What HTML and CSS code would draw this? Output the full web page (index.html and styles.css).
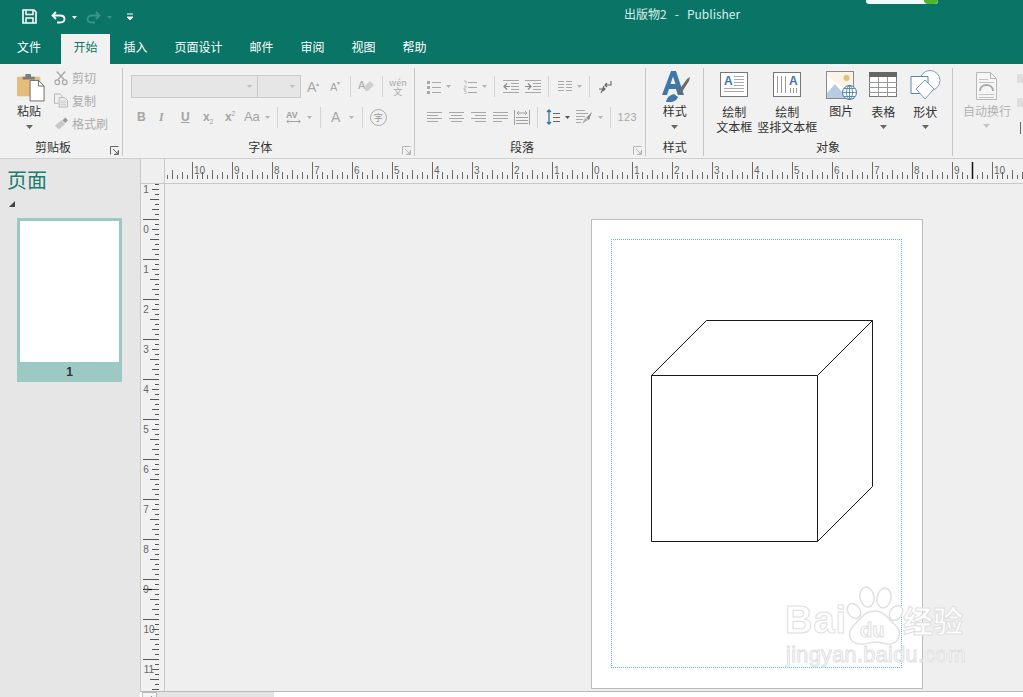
FILE: index.html
```html
<!DOCTYPE html>
<html lang="zh">
<head>
<meta charset="utf-8">
<title>出版物2 - Publisher</title>
<link rel="stylesheet" href="styles.css">
</head>
<body>
<svg class="defs" width="0" height="0" aria-hidden="true">
  <defs>
    <symbol id="arrow" viewBox="0 0 7 4"><path d="M0 0h7L3.5 4z" fill="currentColor"/></symbol>
    <symbol id="launcher" viewBox="0 0 9 9"><path d="M.5 8.5v-8h8M8.5 4v4.5H4M3 3l5 5M5 8h3V5" fill="none" stroke="currentColor"/></symbol>
    <symbol id="al" viewBox="0 0 15 12"><path d="M0 1.5h15M0 4.5h11M0 7.5h15M0 10.500h11" stroke="#a8a8a8"/></symbol>
    <symbol id="ac" viewBox="0 0 15 12"><path d="M0 1.500h15M2 4.500h11M0 7.500h15M2 10.500h11" stroke="#a8a8a8"/></symbol>
    <symbol id="ar" viewBox="0 0 15 12"><path d="M0 1.500h15M4 4.500h11M0 7.500h15M4 10.500h11" stroke="#a8a8a8"/></symbol>
    <symbol id="aj" viewBox="0 0 15 12"><path d="M0 1.500h15M0 4.500h15M0 7.500h15M0 10.500h9" stroke="#a8a8a8"/></symbol>
    <pattern id="hticks" width="40" height="25" patternUnits="userSpaceOnUse" patternTransform="translate(27 0)">
      <path d="M.5 3v17M5.500 16v4M10.500 13v7M15.500 16v4M20.500 11v9M25.500 16v4M30.500 13v7M35.500 16v4" stroke="#6a6a6a"/>
    </pattern>
    <pattern id="vticks" width="25" height="40" patternUnits="userSpaceOnUse" patternTransform="translate(0 35)">
      <path d="M3 .5h16M15 5.500h4M12 10.500h7M15 15.500h4M10 20.500h9M15 25.500h4M12 30.500h7M15 35.500h4" stroke="#555"/>
    </pattern>
  </defs>
</svg>

<header class="topbar">
  <div class="titlerow">
    <div class="qat">
      <svg class="qat-save" width="15" height="15" viewBox="0 0 15 15"><path d="M1 1h11l2 2v11H1z" fill="none" stroke="#fff" stroke-width="1.600"/><path d="M4 1.500v4h7v-4M4 14V9h7v5" fill="none" stroke="#fff" stroke-width="1.500"/></svg>
      <svg class="qat-undo" width="15" height="13" viewBox="0 0 15 13"><path d="M5 1 1.500 4.500 5 8M2 4.500h7c6 0 6 7 0 7H6" fill="none" stroke="#fff" stroke-width="1.800"/></svg>
      <svg class="qat-arr" width="5" height="3"><use href="#arrow"/></svg>
      <svg class="qat-redo" width="15" height="13" viewBox="0 0 15 13"><path d="M10 1l3.500 3.500L10 8M13 4.500H6c-6 0-6 7 0 7h3" fill="none" stroke="#3b9488" stroke-width="1.800"/></svg>
      <svg class="qat-arr dim" width="5" height="3"><use href="#arrow"/></svg>
      <svg class="qat-more" width="6" height="8" viewBox="0 0 6 8"><path d="M0 1h6M0 4h6L3 7z" stroke="#fff" fill="#fff"/></svg>
    </div>
    <div class="doctitle">出版物2 &nbsp;&nbsp;-&nbsp;&nbsp; Publisher</div>
    <div class="notch"><span class="notch-green"></span></div>
  </div>
  <nav class="tabs">
    <span class="tab first">文件</span>
    <span class="tab active">开始</span>
    <span class="tab">插入</span>
    <span class="tab">页面设计</span>
    <span class="tab">邮件</span>
    <span class="tab">审阅</span>
    <span class="tab">视图</span>
    <span class="tab">帮助</span>
  </nav>
</header>

<section class="ribbon">
  <div class="group g-clip">
    <div class="gbody clip-body">
      <div class="big paste">
        <svg width="28" height="31" viewBox="0 0 30 31"><rect x="0" y="5" width="25" height="21" rx="1" fill="#e3bd79"/><path d="M6 5h3V2h6v3h4v3H6z" fill="#7d7d7d"/><path d="M14 9h9l6 6v16H14z" fill="#fff" stroke="#666"/><path d="M23 9v6h6" fill="none" stroke="#666"/></svg>
        <span class="lbl dark">粘贴</span>
        <svg class="drop" width="7" height="4"><use href="#arrow"/></svg>
      </div>
      <div class="smalls">
        <div class="small"><svg width="15" height="16" viewBox="0 0 15 16"><path d="M3 1l8 9M12 1 4 10" stroke="#a8a8a8" stroke-width="1.500"/><circle cx="3.500" cy="12.500" r="2.500" fill="none" stroke="#a8a8a8" stroke-width="1.300"/><circle cx="11.500" cy="12.500" r="2.500" fill="none" stroke="#a8a8a8" stroke-width="1.300"/></svg><span>剪切</span></div>
        <div class="small"><svg width="15" height="15" viewBox="0 0 15 15"><path d="M.5.500h6l2 2v2M.5.500v10h4M5.500 4.500h6l3 3v7h-9z" fill="none" stroke="#b0b0b0"/><path d="M7 8h6M7 10h6M7 12h6" stroke="#c4c4c4"/></svg><span>复制</span></div>
        <div class="small"><svg width="15" height="13" viewBox="0 0 15 13"><path d="M1 9l7-6 4 4-7 6z" fill="#c8c8c8"/><path d="M9 3l3-3 3 3-3 3z" fill="#9a9a9a"/></svg><span>格式刷</span></div>
      </div>
    </div>
    <div class="glabel shifted">剪贴板<svg class="launch" width="9" height="9"><use href="#launcher"/></svg></div>
  </div>

  <div class="group g-font">
    <div class="gbody rows">
      <div class="row r1-font">
        <div class="combo c-name"><svg width="5" height="3"><use href="#arrow"/></svg></div>
        <div class="combo c-size"><svg width="5" height="3"><use href="#arrow"/></svg></div>
        <span class="gly w-a1">A<sup>▴</sup></span>
        <span class="gly w-a2">A<sup>▾</sup></span>
        <i class="sep"></i>
        <svg class="erase" width="16" height="15" viewBox="0 0 16 15"><path d="M7 7l5-5 4 4-6 6H7z" fill="#cfcfcf"/><text x="0" y="10" class="erase-a">A</text></svg>
        <i class="sep"></i>
        <span class="wen"><span>wén</span><span>文</span></span>
      </div>
      <div class="row r2-font">
        <span class="fmt b">B</span>
        <span class="fmt it">I</span>
        <span class="fmt u">U</span>
        <span class="fmt b">x<sub>2</sub></span>
        <span class="fmt b sq">x<sup>2</sup></span>
        <span class="fmt aa">Aa</span>
        <svg class="mini" width="5" height="3"><use href="#arrow"/></svg>
        <i class="sep s1"></i>
        <span class="fmt av"><svg width="16" height="17" viewBox="0 0 18 17"><text x="0" y="9" class="av-t">AV</text><path d="M1 13h15M3 11l-2 2 2 2M14 11l2 2-2 2" fill="none" stroke="#999"/></svg></span>
        <svg class="mini" width="5" height="3"><use href="#arrow"/></svg>
        <i class="sep s2"></i>
        <span class="fmt col-a">A</span>
        <svg class="mini" width="5" height="3"><use href="#arrow"/></svg>
        <i class="sep s3"></i>
        <span class="zi">字</span>
      </div>
    </div>
    <div class="glabel shifted">字体<svg class="launch light" width="9" height="9"><use href="#launcher"/></svg></div>
  </div>

  <div class="group g-para">
    <div class="gbody rows">
      <div class="row r1-para">
        <svg width="14" height="14" viewBox="0 0 14 14"><path d="M5 2.500h9M5 7.500h9M5 12.500h9" stroke="#a8a8a8"/><path d="M0 1h3v3H0zM0 6h3v3H0zM0 11h3v3H0z" fill="#a8a8a8"/></svg>
        <svg class="mini" width="5" height="3"><use href="#arrow"/></svg>
        <svg class="ml12" width="14" height="14" viewBox="0 0 14 14"><path d="M5 2.500h9M5 7.500h9M5 12.500h9" stroke="#a8a8a8"/><path d="M1 1h2v3M1 6h2v2H1v2h2M1 11h2v3H1" fill="none" stroke="#b4b4b4" stroke-width=".8"/></svg>
        <svg class="mini" width="5" height="3"><use href="#arrow"/></svg>
        <i class="sep p1"></i>
        <svg class="ml8" width="16" height="13" viewBox="0 0 16 13"><path d="M0 .500h16M8 3.500h8M8 6.500h8M8 9.500h8M0 12.500h16" stroke="#a8a8a8"/><path d="M7 6.500H1M4 3.500l-3 3 3 3" fill="none" stroke="#8a8a8a" stroke-width="1.200"/></svg>
        <svg class="ml6" width="16" height="13" viewBox="0 0 16 13"><path d="M0 .500h16M8 3.500h8M8 6.500h8M8 9.500h8M0 12.500h16" stroke="#a8a8a8"/><path d="M0 6.500h6M3 3.500l3 3-3 3" fill="none" stroke="#8a8a8a" stroke-width="1.200"/></svg>
        <i class="sep p2"></i>
        <svg class="ml9" width="14" height="11" viewBox="0 0 14 11"><path d="M0 .500h6M8 .500h6M0 3.500h6M8 3.500h6M0 6.500h6M8 6.500h6M0 9.500h6M8 9.500h6" stroke="#a8a8a8"/></svg>
        <svg class="mini" width="5" height="3"><use href="#arrow"/></svg>
        <i class="sep p3"></i>
        <svg class="ml9" width="13" height="14" viewBox="0 0 13 14"><path d="M12 1v4H6M8 3 6 5l2 2" fill="none" stroke="#666" stroke-width="1.100"/><path d="M0 9h6M4 7l2 2-2 2M5 6 2 13" fill="none" stroke="#666" stroke-width="1.100"/></svg>
      </div>
      <div class="row r2-para">
        <svg width="15" height="12"><use href="#al"/></svg>
        <svg class="ml7" width="15" height="12"><use href="#ac"/></svg>
        <svg class="ml7" width="15" height="12"><use href="#ar"/></svg>
        <svg class="ml7" width="15" height="12"><use href="#aj"/></svg>
        <svg class="ml6" width="16" height="15" viewBox="0 0 16 15"><path d="M.5 0v15M15.500 0v15M2 7.500h12M2 10.500h12M2 13.500h12" stroke="#a0a0a0"/><path d="M3 3h10M5 1 3 3l2 2M11 1l2 2-2 2" fill="none" stroke="#a0a0a0"/></svg>
        <i class="sep p4"></i>
        <svg class="ml8" width="14" height="16" viewBox="0 0 14 16"><path d="M3 1v14M1 3l2-2 2 2M1 13l2 2 2-2" fill="none" stroke="#2f73a8" stroke-width="1.300"/><path d="M7 4.500h7M7 8.500h7M7 12.500h7" stroke="#666"/></svg>
        <svg class="mini dk" width="5" height="3"><use href="#arrow"/></svg>
        <svg class="ml6" width="17" height="15" viewBox="0 0 17 15"><path d="M0 .500h9M0 3.500h12M0 6.500h9M0 9.500h7M0 12.500h5" stroke="#a8a8a8"/><path d="M6 14l3-6 3 2z" fill="#b0b0b0"/><path d="M10 8l6-6-3 8z" fill="#8c8c8c"/></svg>
        <svg class="mini" width="5" height="3"><use href="#arrow"/></svg>
        <i class="sep p5"></i>
        <span class="n123">123</span>
      </div>
    </div>
    <div class="glabel shifted">段落<svg class="launch light" width="9" height="9"><use href="#launcher"/></svg></div>
  </div>

  <div class="group g-style">
    <div class="gbody">
      <div class="big stylebtn">
        <svg width="30" height="31" viewBox="0 0 30 31"><path fill-rule="evenodd" d="M2 24 11 0h5l8 24h-6l-2-6H9l-2 6zM10.500 13h5L13 5.500z" fill="#3f77a8"/><path d="M6 31c1-5 4-7 8-8l4 3c-1 4-6 6-12 5z" fill="#3f77a8"/><path d="M17 22 27 8l3-2-1 4-9 14z" fill="#6a6a6a"/></svg>
        <span class="lbl dark">样式</span>
        <svg class="drop" width="7" height="4"><use href="#arrow"/></svg>
      </div>
    </div>
    <div class="glabel">样式</div>
  </div>

  <div class="group g-obj">
    <div class="gbody objs">
      <div class="big o-text">
        <svg width="28" height="26" viewBox="0 0 28 26"><rect x=".5" y=".5" width="27" height="24" fill="#fff" stroke="#777"/><text x="4" y="13" class="ic-a">A</text><path d="M14 4.500h10M14 7.500h10M14 10.500h10M14 13.500h10M4 16.500h20M4 19.500h20" stroke="#aaa"/></svg>
        <span class="lbl dark">绘制<br>文本框</span>
      </div>
      <div class="big o-vert">
        <svg width="28" height="26" viewBox="0 0 28 26"><rect x=".5" y=".5" width="27" height="24" fill="#fff" stroke="#777"/><text x="16" y="13" class="ic-a">A</text><path d="M4.500 4v17M8.500 4v17M12.500 4v17M17.500 16v5M20.500 16v5M23.500 16v5" stroke="#999"/></svg>
        <span class="lbl dark">绘制<br>竖排文本框</span>
      </div>
      <div class="big o-pic">
        <svg width="31" height="29" viewBox="0 0 31 29"><rect x=".5" y=".5" width="27" height="27" fill="#fff" stroke="#8a8a8a"/><path d="M1 5V1h26v22" fill="#fbf3e3"/><circle cx="20.500" cy="7" r="3" fill="#e3bd79"/><path d="M1 27v-5l8-9 7 8 3 6z" fill="#b8cbe0"/><circle cx="23.500" cy="21.500" r="7" fill="#fff" stroke="#3f77a8"/><path d="M16.500 21.500h14M23.500 14.500v14M18 17.500h11M18 25.500h11" stroke="#3f77a8" stroke-width=".8" fill="none"/><ellipse cx="23.500" cy="21.500" rx="3" ry="7" fill="none" stroke="#3f77a8" stroke-width=".8"/></svg>
        <span class="lbl dark">图片</span>
      </div>
      <div class="big o-table">
        <svg width="28" height="26" viewBox="0 0 28 26"><rect x=".5" y=".5" width="27" height="24" fill="#fff" stroke="#777"/><rect width="28" height="5" fill="#666"/><path d="M0 10.500h28M0 15.500h28M0 20.500h28M9.500 5v20M18.500 5v20" stroke="#999"/></svg>
        <span class="lbl dark">表格</span>
        <svg class="drop" width="7" height="4"><use href="#arrow"/></svg>
      </div>
      <div class="big o-shape">
        <svg width="31" height="30" viewBox="0 0 31 30"><circle cx="20" cy="10.500" r="10" fill="#fff" stroke="#7f9fba"/><path d="M1 6.500h17v17H1z" fill="#fff" stroke="#5a86ad"/><path d="M15 10l9 9-9 10-9-10z" fill="#fff" stroke="#7a9ab5"/></svg>
        <span class="lbl dark">形状</span>
        <svg class="drop" width="7" height="4"><use href="#arrow"/></svg>
      </div>
    </div>
    <div class="glabel">对象</div>
  </div>

  <div class="group g-wrap">
    <div class="gbody">
      <div class="big o-wrap">
        <svg width="21" height="28" viewBox="0 0 21 28"><path d="M.5.500h14l6 6v21H.5z" fill="#f6f6f6" stroke="#b8b8b8"/><path d="M14.500.500v6h6" fill="none" stroke="#b8b8b8"/><path d="M3 7.500h9M3 10.500h15M3 22.500h15M3 25.500h15" stroke="#c2c2c2"/><path d="M4 19c0-8 13-8 13 0" fill="none" stroke="#a8a8a8" stroke-width="2"/></svg>
        <span class="lbl grey">自动换行</span>
        <svg class="drop pale" width="7" height="4"><use href="#arrow"/></svg>
      </div>
      <div class="edge"><i></i><i></i><b></b></div>
    </div>
  </div>
</section>

<main class="workspace">
  <aside class="pages">
    <h2 class="pages-title">页面</h2>
    <div class="tri"></div>
    <div class="thumb">
      <div class="thumb-page"></div>
      <div class="thumb-num">1</div>
    </div>
  </aside>
  <div class="editor">
    <div class="corner"></div>
    <svg class="hruler" width="858" height="25" viewBox="0 0 858 25">
      <rect width="858" height="24" fill="url(#hticks)"/>
      <path d="M807.500 3v17" stroke="#111" stroke-width="1.500"/>
      <g class="rtext">
        <text x="29" y="15">10</text><text x="69" y="15">9</text><text x="109" y="15">8</text><text x="149" y="15">7</text><text x="189" y="15">6</text><text x="229" y="15">5</text><text x="269" y="15">4</text><text x="309" y="15">3</text><text x="349" y="15">2</text><text x="389" y="15">1</text><text x="429" y="15">0</text><text x="469" y="15">1</text><text x="509" y="15">2</text><text x="549" y="15">3</text><text x="589" y="15">4</text><text x="629" y="15">5</text><text x="669" y="15">6</text><text x="709" y="15">7</text><text x="749" y="15">8</text><text x="789" y="15">9</text><text x="829" y="15">10</text>
      </g>
    </svg>
    <svg class="vruler" width="25" height="507" viewBox="0 0 25 507">
      <rect width="25" height="507" fill="url(#vticks)"/>
      <path d="M3 405.500h9" stroke="#111" stroke-width="1.200"/>
      <g class="rtext mid">
        <text x="6" y="9">1</text><text x="6" y="49">0</text><text x="6" y="89">1</text><text x="6" y="129">2</text><text x="6" y="169">3</text><text x="6" y="209">4</text><text x="6" y="249">5</text><text x="6" y="289">6</text><text x="6" y="329">7</text><text x="6" y="369">8</text><text x="6" y="409">9</text><text x="9" y="449">10</text><text x="9" y="489">11</text>
      </g>
    </svg>
    <div class="canvas">
      <div class="page">
        <div class="guide"></div>
        <svg class="cube" width="223" height="223" viewBox="0 0 223 223"><path d="M.5 55.500h166v166H.5zM.5 55.500l55-55h166l-55 55M221.500.500v166l-55 55" fill="none" stroke="#1a1a1a"/></svg>
      </div>
    </div>
    <div class="scrollbar">
      <span class="sb-btn"><svg width="5" height="7" viewBox="0 0 5 7"><path d="M5 0v7L0 3.500z" fill="#666"/></svg></span>
      <span class="sb-thumb"></span>
      <span class="sb-rest"></span>
    </div>
  </div>
</main>

<div class="watermark" aria-label="Baidu经验 jingyan.baidu.com">
  <svg width="190" height="90" viewBox="0 0 190 90">
    <g fill="#fff" stroke="#e0e0e0" stroke-width="1.500">
      <ellipse cx="69" cy="25" rx="6" ry="8" transform="rotate(-35 69 25)"/>
      <ellipse cx="82" cy="11" rx="7" ry="10" transform="rotate(-10 82 11)"/>
      <ellipse cx="99" cy="12" rx="7" ry="10" transform="rotate(10 99 12)"/>
      <ellipse cx="111" cy="27" rx="6" ry="8" transform="rotate(35 111 27)"/>
      <path d="M90 25c10 0 13 8 20 14 9 8 3 19-6 19-5 0-9-2-14-2s-10 3-15 2c-11-1-14-11-6-19 7-6 10-14 21-14z"/>
    </g>
    <g class="wm-text">
      <text x="0" y="47" class="wm-bai">Bai</text>
      <text x="75" y="51" class="wm-du">du</text>
      <text x="118" y="46" class="wm-jy">经验</text>
      <text x="1" y="76" class="wm-url">jingyan.baidu.com</text>
    </g>
  </svg>
</div>
</body>
</html>
```
FILE: styles.css
```css
* { box-sizing: border-box; }
html, body { margin: 0; padding: 0; height: 697px; overflow: hidden; }
body {
  position: relative;
  display: flex;
  flex-direction: column;
  font-family: "Noto Sans CJK SC", "Liberation Sans", sans-serif;
  font-size: 12px;
  color: #333;
  background: #efefef;
}
svg { display: block; flex: none; }
.defs { position: absolute; }

/* top bar */
.topbar { height: 64px; background: #0a7566; color: #fff; flex: none; }
.titlerow { height: 34px; display: flex; align-items: center; position: relative; }
.qat { display: flex; align-items: center; padding-left: 22px; width: 500px; color: #fff; }
.qat-save { margin-top: -1px; }
.qat-undo { margin-left: 14px; }
.qat-arr { margin-left: 6px; }
.qat-arr.dim { color: #3b9488; }
.qat-redo { margin-left: 9px; }
.qat-more { margin-left: 15px; }
.doctitle { position: absolute; left: 624px; top: 5px; font-size: 12px; line-height: 17px; color: #d9efe9; white-space: nowrap; }
.notch { position: absolute; left: 866px; top: 0; width: 72px; height: 4px; background: #f2fbfb; border-radius: 0 0 3px 3px; }
.notch-green { position: absolute; right: 0; top: 0; width: 14px; height: 4px; background: #4fb52d; border-radius: 0 0 5px 5px; }

.tabs { height: 30px; display: flex; line-height: 26px; }
.tab { padding: 0 13.500px; color: #fff; }
.tab.first { margin-left: 3.500px; margin-right: 6.500px; }
.tab.active { width: 49px; padding: 0; text-align: center; background: #f1f1f1; color: #0a7566; }

/* ribbon */
.ribbon { height: 95px; flex: none; display: flex; background: #f1f1f1; border-bottom: 1px solid #cfcfcf; }
.group { position: relative; display: flex; flex-direction: column; border-right: 1px solid #c6c6c6; margin-bottom: 6px; height: 88px; margin-top: 4px; }
.gbody { flex: 1; position: relative; min-height: 0; }
.glabel { height: 20px; text-align: center; line-height: 21px; color: #333; position: relative; }
.glabel.shifted { padding-right: 16px; }
.launch { position: absolute; right: 3px; bottom: 1px; color: #666; }
.launch.light { color: #b5b5b5; }
.g-clip { width: 123px; }
.g-font { width: 292px; }
.g-para { width: 232px; }
.g-style { width: 58px; }
.g-obj { width: 249px; }
.g-wrap { flex: 1; border-right: 0; }

.big { display: flex; flex-direction: column; align-items: center; line-height: 15px; }
.lbl { margin-top: 4px; white-space: nowrap; text-align: center; }
.lbl.dark { color: #333; }
.lbl.grey { color: #b2b2b2; }
.drop { margin-top: 5px; color: #666; }
.drop.pale { color: #c4c4c4; }

.clip-body { display: flex; padding-left: 17px; padding-top: 3px; }
.paste { width: 28px; }
.paste .lbl { margin-top: 1px; margin-right: 4px; }
.paste .drop { margin-top: 7px; margin-right: 4px; }
.smalls { margin-left: 9px; margin-top: -2px; display: flex; flex-direction: column; gap: 6px; }
.small { display: flex; align-items: center; height: 17px; gap: 4px; color: #ababab; }
.small svg { width: 14px; }

.rows { display: flex; flex-direction: column; }
.row { display: flex; align-items: center; flex: none; }
.sep { display: block; width: 1px; height: 21px; background: #d2d2d2; flex: none; }
.mini { color: #b4b4b4; margin-left: 5px; }
.mini.dk { color: #555; }
.ml6 { margin-left: 6px; } .ml7 { margin-left: 7px; } .ml8 { margin-left: 8px; } .ml9 { margin-left: 9px; } .ml12 { margin-left: 12px; }

.r1-font { padding: 6px 0 0 8px; height: 31px; }
.combo { height: 23px; background: #e6e6e6; border: 1px solid #c9c9c9; display: flex; align-items: center; justify-content: flex-end; padding-right: 5px; color: #bdbdbd; }
.c-name { width: 127px; }
.c-size { width: 43px; border-left: 0; }
.gly { color: #a8a8a8; font-size: 14px; font-family: "Liberation Sans", sans-serif; line-height: 18px; }
.gly sup { font-size: 6px; vertical-align: 6px; line-height: 0; }
.w-a1 { margin-left: 6px; width: 23px; }
.w-a2 { width: 20px; font-size: 11px; }
.erase { margin-left: 7px; }
.erase-a { font: 11px "Liberation Sans", sans-serif; fill: #a8a8a8; }
.wen { margin-left: 7px; display: flex; flex-direction: column; align-items: center; font-size: 9px; line-height: 9px; color: #aaa; width: 16px; }
.r1-font .erase + .sep { margin-left: 8px; }

.r2-font { padding: 0 0 0 14px; height: 36px; font-family: "Liberation Sans", sans-serif; }
.fmt { color: #a4a4a4; width: 22px; font-size: 12px; line-height: 16px; flex: none; }
.fmt.b { font-weight: 700; }
.fmt.sq { width: 19px; }
.fmt.it { font-style: italic; font-family: "Liberation Serif", serif; font-weight: 700; }
.fmt.u { text-decoration: underline; font-weight: 700; }
.fmt sub, .fmt sup { font-size: 7px; line-height: 0; font-weight: 400; }
.fmt.aa { width: 16px; font-size: 13px; }
.fmt.av { width: 16px; }
.av-t { font: 700 10px "Liberation Sans", sans-serif; fill: #a0a0a0; }
.s1 { margin-left: 7px; margin-right: 8px; }
.s2 { margin-left: 8px; margin-right: 10px; }
.fmt.col-a { font-size: 14px; width: 13px; }
.s3 { margin-left: 8px; }
.zi { margin-left: 7px; width: 17px; height: 17px; border: 1px solid #aaa; border-radius: 50%; color: #999; font: 9px/15px "Noto Sans CJK SC", sans-serif; text-align: center; }

.r1-para { padding: 6px 0 0 12px; height: 31px; }
.p1 { margin-left: 7px; } .p2 { margin-left: 7px; } .p3 { margin-left: 7px; }
.r2-para { padding: 0 0 0 12px; height: 36px; }
.p4 { margin-left: 7px; } .p5 { margin-left: 7px; }
.n123 { margin-left: 7px; color: #a8a8a8; font: 11px "Liberation Sans", sans-serif; letter-spacing: .4px; }
.ic-a { font: 700 12px "Liberation Sans", sans-serif; fill: #3f77a8; }

.stylebtn { padding-top: 3px; }
.stylebtn .lbl { margin-top: 1px; }
.stylebtn .drop { margin-top: 7px; }
.objs { display: flex; padding-left: 7px; padding-top: 4px; }
.o-text { width: 46px; }
.o-vert { width: 60px; }
.o-pic { width: 42px; margin-left: 3px; margin-top: -1px; }
.o-table { width: 42px; }
.o-shape { width: 42px; margin-top: -2px; }
.objs .lbl { margin-top: 6px; }
.objs .o-shape .lbl { margin-top: 4px; }
.objs .o-pic .lbl { margin-top: 3px; }
.objs .drop { margin-top: 6px; }

.g-wrap .gbody { display: flex; padding-left: 10px; padding-top: 4px; }
.o-wrap { width: 48px; }
.o-wrap .lbl { margin-top: 3px; }
.o-wrap .drop { margin-top: 6px; }
.edge { position: relative; margin-left: 6px; width: 6px; }
.edge i { position: absolute; left: 0; width: 6px; height: 9px; background: #dedede; }
.edge i:first-child { top: 2px; }
.edge i:nth-child(2) { top: 26px; }
.edge b { position: absolute; left: 3px; top: 50px; width: 1px; height: 12px; background: #666; }

/* workspace */
.workspace { flex: 1; display: flex; min-height: 0; }
.pages { width: 140px; flex: none; background: #e6e6e6; }
.pages-title { margin: 8px 0 0 7px; font-size: 20px; line-height: 26px; font-weight: 400; color: #1f7a70; }
.tri { margin: 8px 0 0 9px; width: 0; height: 0; border-style: solid; border-width: 0 0 6px 6px; border-color: transparent transparent #444 transparent; }
.thumb { margin: 11px 0 0 17px; width: 105px; background: #9cc9c4; padding: 3px 3px 0; }
.thumb-page { height: 141px; background: #fff; }
.thumb-num { height: 20px; text-align: center; font: 700 12px/20px "Liberation Sans", sans-serif; color: #333; }

.editor { flex: 1; display: grid; grid-template-columns: 25px 1fr; grid-template-rows: 25px 1fr 7px; min-width: 0; background: #efefef; }
.corner { background: #efefef; border: 1px solid #c8c8c8; border-top: 0; }
.hruler { background: #f1f1f1; box-shadow: inset 0 -1px #c8c8c8; }
.vruler { background: #f1f1f1; box-shadow: inset 1px 0 #c8c8c8, inset -1px 0 #c8c8c8; }
.rtext text { font: 10px "Liberation Sans", sans-serif; fill: #666; }
.rtext.mid text { text-anchor: middle; }
.canvas { position: relative; overflow: hidden; background: #efefef; }
.page { position: absolute; left: 426px; top: 35px; width: 332px; height: 470px; background: #fff; border: 1px solid #bcbcbc; }
.guide { position: absolute; left: 19px; top: 19px; width: 291px; height: 429px; border: 1px dotted #62b4d0; }
.cube { position: absolute; left: 59px; top: 100px; }

.scrollbar { grid-column: 1 / -1; display: flex; height: 7px; background: #fff; border-top: 1px solid #b9b9b9; }
.sb-btn { width: 15px; margin-left: 2px; height: 14px; background: #f4f4f4; border: 1px solid #bbb; display: flex; justify-content: center; padding-top: 3px; }
.sb-thumb { width: 117px; background: #e4e4e4; }
.sb-rest { flex: 1; background: #fff; }

/* watermark */
.watermark { position: absolute; left: 785px; top: 586px; pointer-events: none; }
.wm-text text { fill: #fff; stroke: #e0e0e0; stroke-width: 1px; font-family: "Liberation Sans", sans-serif; }
.wm-bai { font-size: 38px; font-weight: 700; letter-spacing: 1px; }
.wm-du { font-size: 20px; font-weight: 700; }
.wm-text .wm-jy { font-size: 30px; font-family: "Noto Sans CJK SC", sans-serif; font-weight: 700; }
.wm-url { font-size: 21.500px; letter-spacing: .4px; }
```
